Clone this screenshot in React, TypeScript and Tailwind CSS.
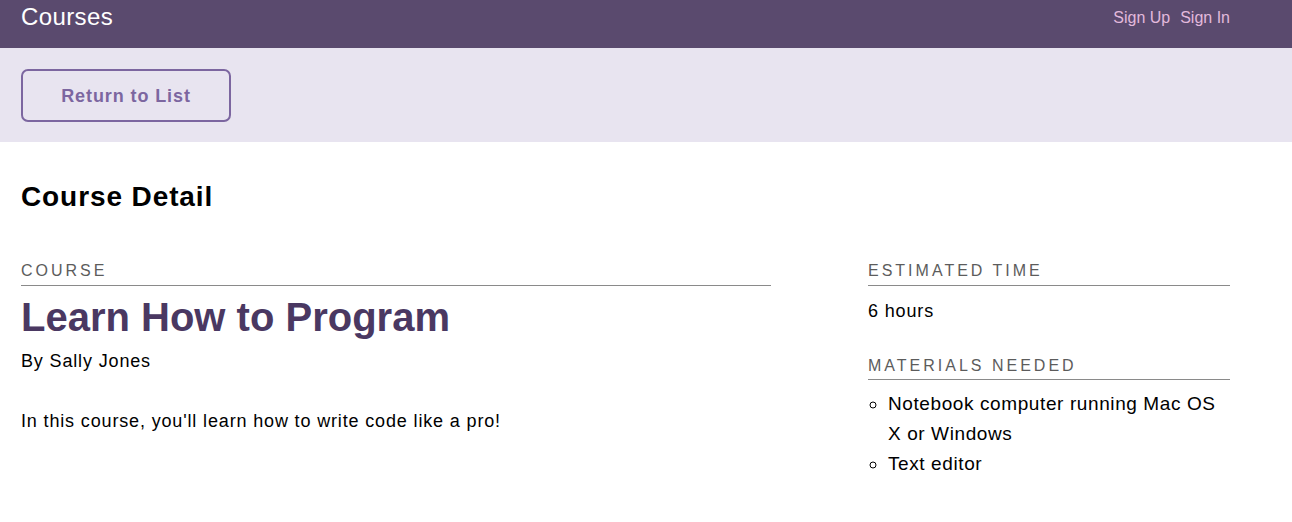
const materials = ['Notebook computer running Mac OS X or Windows', 'Text editor'];

const App = () => {
  return (
    <div className="min-h-screen bg-white text-black" style={{ fontFamily: '"Liberation Sans", Arial, sans-serif' }}>
      {/* Header */}
      <header className="h-12 bg-[#5a4a6e]">
        <div className="flex items-start justify-between pl-[21px] pr-[62px]">
          <h1 className="text-[24px] leading-[34px] tracking-[0.4px] text-white">Courses</h1>
          <nav className="flex gap-[10px] pt-[8px] text-[16px] leading-[20px] text-[#e2b9dc]">
            <a href="#">Sign Up</a>
            <a href="#">Sign In</a>
          </nav>
        </div>
      </header>

      {/* Actions bar */}
      <div className="h-[94px] bg-[#e8e4f0] px-[21px] pt-[21px]">
        <button className="h-[53px] w-[210px] rounded-[7px] border-2 border-[#7c66a0] pt-[2px] text-[18px] font-bold tracking-[0.9px] text-[#7c66a0]">
          Return to List
        </button>
      </div>

      {/* Detail */}
      <main className="px-[21px] pt-[38px]">
        <h2 className="text-[28px] font-bold leading-[34px] tracking-[0.9px]">Course Detail</h2>

        <div className="mt-[47px] flex gap-[97px]">
          <div className="w-[750px]">
            <h3 className="border-b border-[#8a8a8a] pb-[4px] text-[16px] leading-[20px] tracking-[3px] text-[#5c5c5c]">COURSE</h3>
            <h4 className="mt-[1px] text-[40px] font-bold leading-[60px] text-[#4a3862]">Learn How to Program</h4>
            <p className="text-[18px] leading-[28px] tracking-[0.85px]">By Sally Jones</p>
            <p className="mt-[32px] text-[18px] leading-[28px] tracking-[0.85px]">In this course, you'll learn how to write code like a pro!</p>
          </div>

          <div className="w-[362px]">
            <h3 className="border-b border-[#8a8a8a] pb-[4px] text-[16px] leading-[20px] tracking-[3px] text-[#5c5c5c]">ESTIMATED TIME</h3>
            <p className="mt-[11px] text-[18px] leading-[28px] tracking-[0.85px]">6 hours</p>

            <h3 className="mt-[31px] border-b border-[#8a8a8a] pb-[3px] text-[16px] leading-[20px] tracking-[3px] text-[#5c5c5c]">MATERIALS NEEDED</h3>
            <ul className="mt-[9px] pl-[20px] text-[19px] leading-[30px] tracking-[0.6px]" style={{ listStyleType: 'circle' }}>
              {materials.map((m) => (
                <li key={m}>{m}</li>
              ))}
            </ul>
          </div>
        </div>
      </main>
    </div>
  );
};

export default App;
